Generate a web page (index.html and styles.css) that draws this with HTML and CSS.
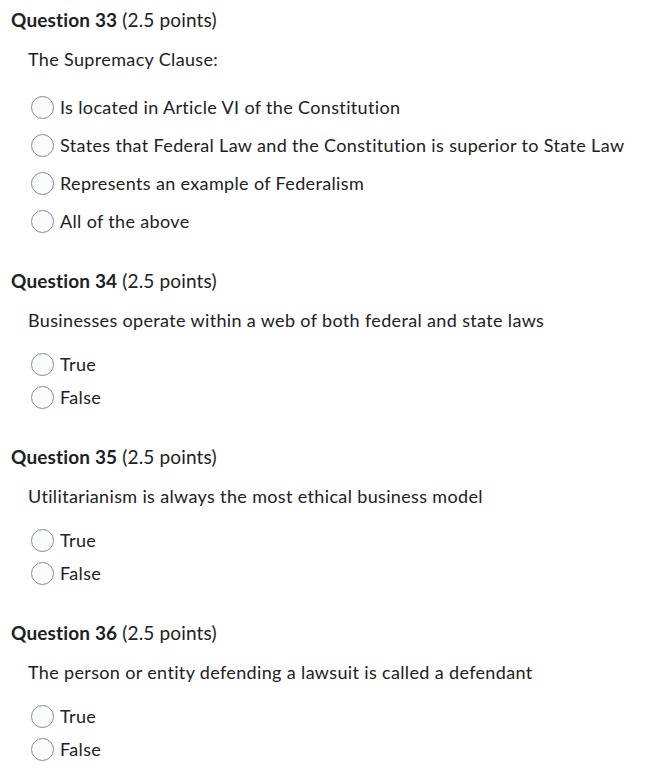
FILE: index.html
```html
<!DOCTYPE html>
<html>
<head>
<meta charset="utf-8">
<link rel="stylesheet" href="styles.css">
</head>
<body>
<div class="quiz">
  <section class="question">
    <h2 class="q-title"><strong>Question 33</strong> (2.5 points)</h2>
    <p class="q-text">The Supremacy Clause:</p>
    <ul class="options multi">
      <li><span class="radio"></span><span>Is located in Article VI of the Constitution</span></li>
      <li><span class="radio"></span><span>States that Federal Law and the Constitution is superior to State Law</span></li>
      <li><span class="radio"></span><span>Represents an example of Federalism</span></li>
      <li><span class="radio"></span><span>All of the above</span></li>
    </ul>
  </section>
  <section class="question">
    <h2 class="q-title"><strong>Question 34</strong> (2.5 points)</h2>
    <p class="q-text">Businesses operate within a web of both federal and state laws</p>
    <ul class="options">
      <li><span class="radio"></span><span>True</span></li>
      <li><span class="radio"></span><span>False</span></li>
    </ul>
  </section>
  <section class="question">
    <h2 class="q-title"><strong>Question 35</strong> (2.5 points)</h2>
    <p class="q-text">Utilitarianism is always the most ethical business model</p>
    <ul class="options">
      <li><span class="radio"></span><span>True</span></li>
      <li><span class="radio"></span><span>False</span></li>
    </ul>
  </section>
  <section class="question">
    <h2 class="q-title"><strong>Question 36</strong> (2.5 points)</h2>
    <p class="q-text">The person or entity defending a lawsuit is called a defendant</p>
    <ul class="options">
      <li><span class="radio"></span><span>True</span></li>
      <li><span class="radio"></span><span>False</span></li>
    </ul>
  </section>
</div>
</body>
</html>
```

FILE: styles.css
```css
html, body {
  margin: 0;
  padding: 0;
  background: #ffffff;
}
body {
  font-family: Lato, "Open Sans", sans-serif;
  color: #202122;
  font-size: 18px;
}
.quiz {
  padding: 8px 0 0 11px;
}
.question {
  margin: 0 0 36px 0;
}
.q-title {
  margin: 0;
  font-size: 19px;
  font-weight: 400;
  line-height: 24px;
  letter-spacing: 0.15px;
  color: #202122;
}
.q-title strong {
  font-weight: 700;
}
.q-text {
  margin: 15px 0 0 17px;
  line-height: 24px;
  letter-spacing: 0.35px;
}
.options {
  list-style: none;
  margin: 20px 0 0 20px;
  padding: 0;
  display: flex;
  flex-direction: column;
  gap: 9px;
  letter-spacing: 0.35px;
}
.options.multi {
  margin-top: 24px;
  gap: 14px;
}
.options li {
  display: flex;
  align-items: center;
  gap: 6px;
  line-height: 24px;
}
.radio {
  width: 21px;
  height: 21px;
  border: 1px solid #868c8f;
  border-radius: 50%;
  background: #f9fbff;
  flex: none;
}
```
